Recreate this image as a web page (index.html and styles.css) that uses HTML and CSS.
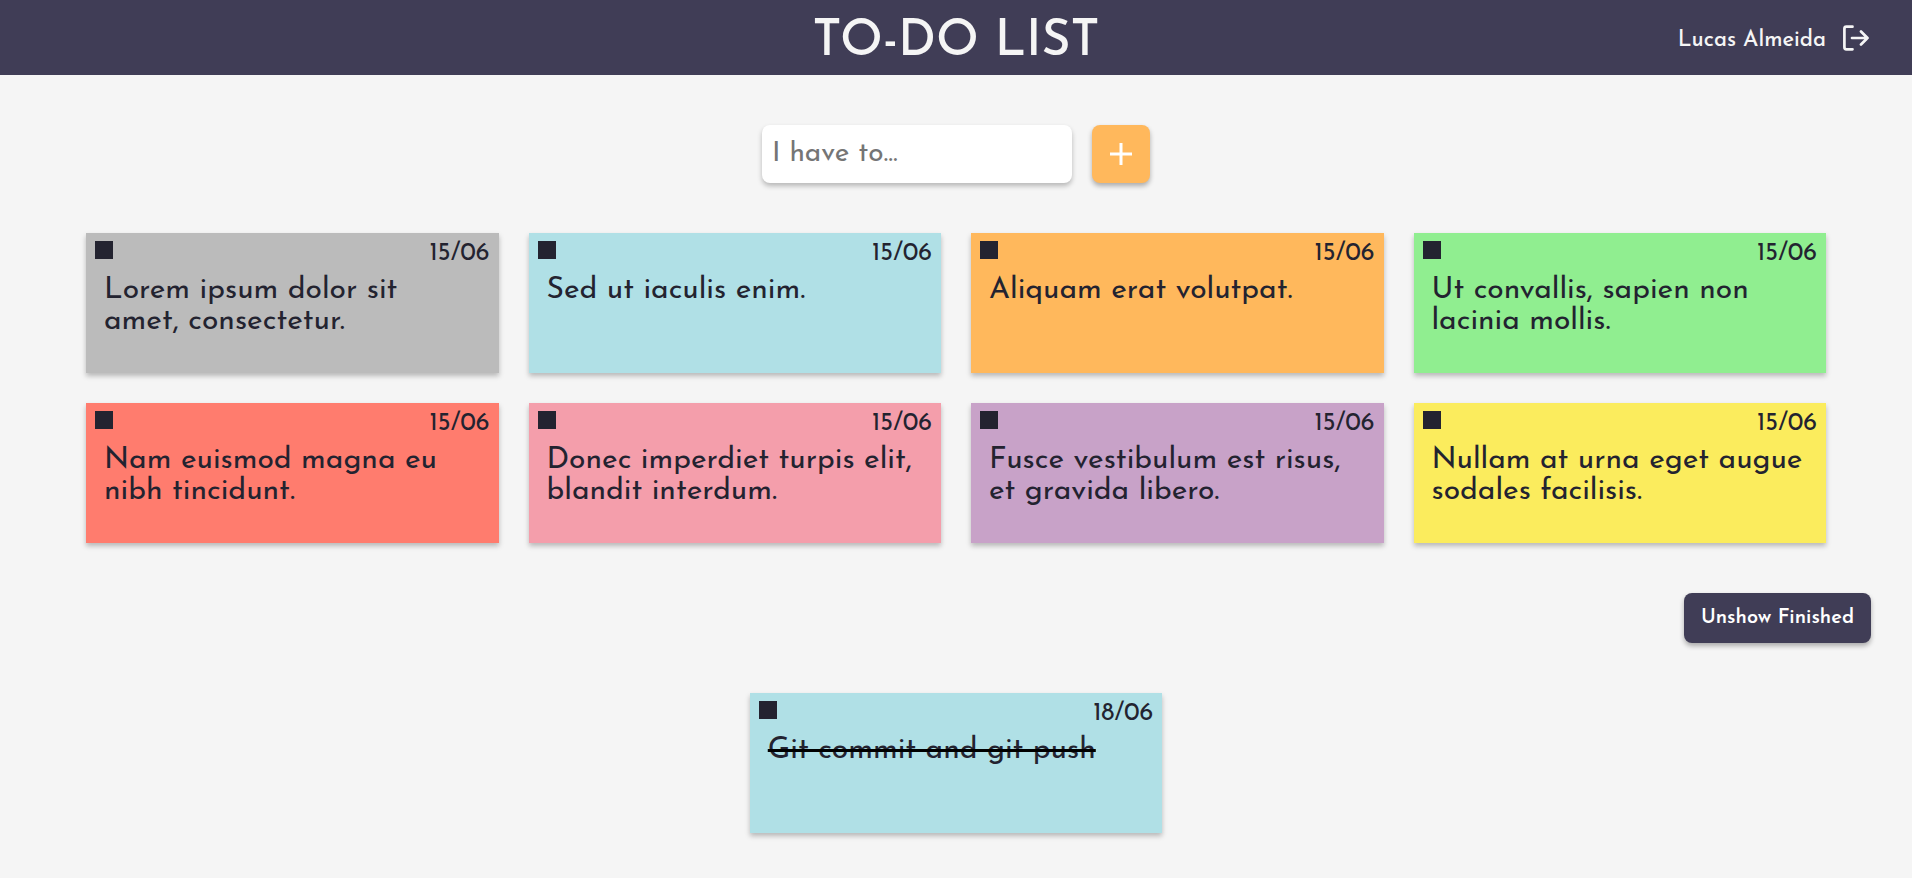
FILE: index.html
```html
<!DOCTYPE html>
<html lang="en">
<head>
<meta charset="utf-8">
<meta name="viewport" content="width=device-width, initial-scale=1">
<title>To-do List</title>
<link rel="stylesheet" href="styles.css">
</head>
<body>
<header class="header">
  <h1 class="header-title">TO-DO LIST</h1>
  <div class="user">
    <span class="user-name">Lucas Almeida</span>
    <button class="logout" type="button" aria-label="Log out">
      <svg viewBox="0 0 26 26" width="26" height="26" fill="none" stroke="currentColor" stroke-width="2.7" stroke-linecap="round" stroke-linejoin="round" aria-hidden="true">
        <path d="M9.5 1.7H3.4Q1.4 1.7 1.4 3.7V22.3Q1.4 24.3 3.4 24.3H9.5"/>
        <path d="M9 13H24.5M18 6.5L24.5 13L18 19.5"/>
      </svg>
    </button>
  </div>
</header>
<main>
  <form class="add">
    <input class="add-input" type="text" placeholder="I have to..." aria-label="New task">
    <button class="add-button" type="button" aria-label="Add task">
      <svg viewBox="0 0 22 22" width="22" height="22" stroke="currentColor" stroke-width="3" aria-hidden="true"><path d="M11 0V22M0 11H22"/></svg>
    </button>
  </form>
  <section class="tasks" aria-label="Tasks">
    <article class="card gray"><div class="card-top"><input class="check" type="checkbox" aria-labelledby="t1"><time>15/06</time></div><p class="text" id="t1">Lorem ipsum dolor sit<br>amet, consectetur.</p></article>
    <article class="card blue"><div class="card-top"><input class="check" type="checkbox" aria-labelledby="t2"><time>15/06</time></div><p class="text" id="t2">Sed ut iaculis enim.</p></article>
    <article class="card orange"><div class="card-top"><input class="check" type="checkbox" aria-labelledby="t3"><time>15/06</time></div><p class="text" id="t3">Aliquam erat volutpat.</p></article>
    <article class="card green"><div class="card-top"><input class="check" type="checkbox" aria-labelledby="t4"><time>15/06</time></div><p class="text" id="t4">Ut convallis, sapien non<br>lacinia mollis.</p></article>
    <article class="card red"><div class="card-top"><input class="check" type="checkbox" aria-labelledby="t5"><time>15/06</time></div><p class="text" id="t5">Nam euismod magna eu<br>nibh tincidunt.</p></article>
    <article class="card pink"><div class="card-top"><input class="check" type="checkbox" aria-labelledby="t6"><time>15/06</time></div><p class="text" id="t6">Donec imperdiet turpis elit,<br>blandit interdum.</p></article>
    <article class="card purple"><div class="card-top"><input class="check" type="checkbox" aria-labelledby="t7"><time>15/06</time></div><p class="text" id="t7">Fusce vestibulum est risus,<br>et gravida libero.</p></article>
    <article class="card yellow"><div class="card-top"><input class="check" type="checkbox" aria-labelledby="t8"><time>15/06</time></div><p class="text" id="t8">Nullam at urna eget augue<br>sodales facilisis.</p></article>
  </section>
  <div class="toggle-row"><button class="toggle" type="button">Unshow Finished</button></div>
  <section class="tasks finished" aria-label="Finished tasks">
    <article class="card blue"><div class="card-top"><input class="check" type="checkbox" checked aria-labelledby="t9"><time>18/06</time></div><p class="text" id="t9"><s class="done">Git commit and git push</s></p></article>
  </section>
</main>
</body>
</html>
```
FILE: styles.css
```css
* { box-sizing: border-box; }

body {
  margin: 0;
  background: #f5f5f5;
  color: #232330;
  font-family: "Josefin Sans", Lato, sans-serif;
}

button, input { font-family: inherit; }

.header {
  display: grid;
  grid-template-columns: 1fr auto 1fr;
  align-items: center;
  height: 75px;
  padding: 0 43px;
  background: #403d56;
  color: #f5f5f5;
}

.header-title {
  grid-column: 2;
  margin: 0;
  padding-top: 10px;
  font-size: 50px;
  font-weight: 500;
  line-height: 60px;
}

.user {
  display: flex;
  justify-content: flex-end;
  align-items: center;
  gap: 17px;
  font-size: 22px;
  font-weight: 500;
}

.user-name { padding-top: 6px; }

.logout {
  display: flex;
  padding: 0;
  border: 0;
  background: none;
  color: inherit;
  cursor: pointer;
}

.add {
  display: flex;
  justify-content: center;
  gap: 20px;
  padding: 50px 20px;
}

.add-input {
  width: 310px;
  height: 58px;
  padding: 0 10px;
  border: 0;
  border-radius: 8px;
  background: #fff;
  box-shadow: 0 3px 5px rgba(0, 0, 0, 0.25);
  font-size: 28px;
}

.add-input::placeholder { color: #757575; }

.add-button {
  display: flex;
  justify-content: center;
  align-items: center;
  width: 58px;
  height: 58px;
  padding: 0;
  border: 0;
  border-radius: 8px;
  background: #ffb85c;
  box-shadow: 0 3px 5px rgba(0, 0, 0, 0.3);
  color: #fff;
  cursor: pointer;
}

.tasks {
  display: grid;
  grid-template-columns: repeat(4, minmax(0, 1fr));
  gap: 30px;
  padding: 0 86px;
}

.finished {
  grid-template-columns: calc((100% - 90px) / 4);
  justify-content: center;
  padding-bottom: 45px;
}

.card {
  min-height: 140px;
  padding: 8px 9px;
  box-shadow: 0 3px 5px rgba(0, 0, 0, 0.25);
}

.card-top {
  display: flex;
  justify-content: space-between;
  align-items: flex-start;
  height: 34px;
  font-size: 25px;
  line-height: 25px;
}

.check {
  appearance: none;
  width: 18px;
  height: 18px;
  margin: 0;
  background: #232330;
}

.text {
  margin: 0;
  padding: 0 9px;
  font-size: 30px;
  line-height: 31px;
  white-space: nowrap;
}

.done { text-decoration: line-through 3px #000; }

.gray { background: #bbb; }
.blue { background: #b0e0e6; }
.orange { background: #ffb85c; }
.green { background: #90ee90; }
.red { background: #ff7c6e; }
.pink { background: #f49eab; }
.purple { background: #c8a2c8; }
.yellow { background: #fbec5d; }

.toggle-row {
  display: flex;
  justify-content: flex-end;
  padding: 50px 41px;
}

.toggle {
  height: 50px;
  padding: 0 17px;
  border: 0;
  border-radius: 8px;
  background: #403d56;
  box-shadow: 0 3px 5px rgba(0, 0, 0, 0.3);
  color: #fff;
  font-size: 20px;
  font-weight: 600;
  cursor: pointer;
}
```
